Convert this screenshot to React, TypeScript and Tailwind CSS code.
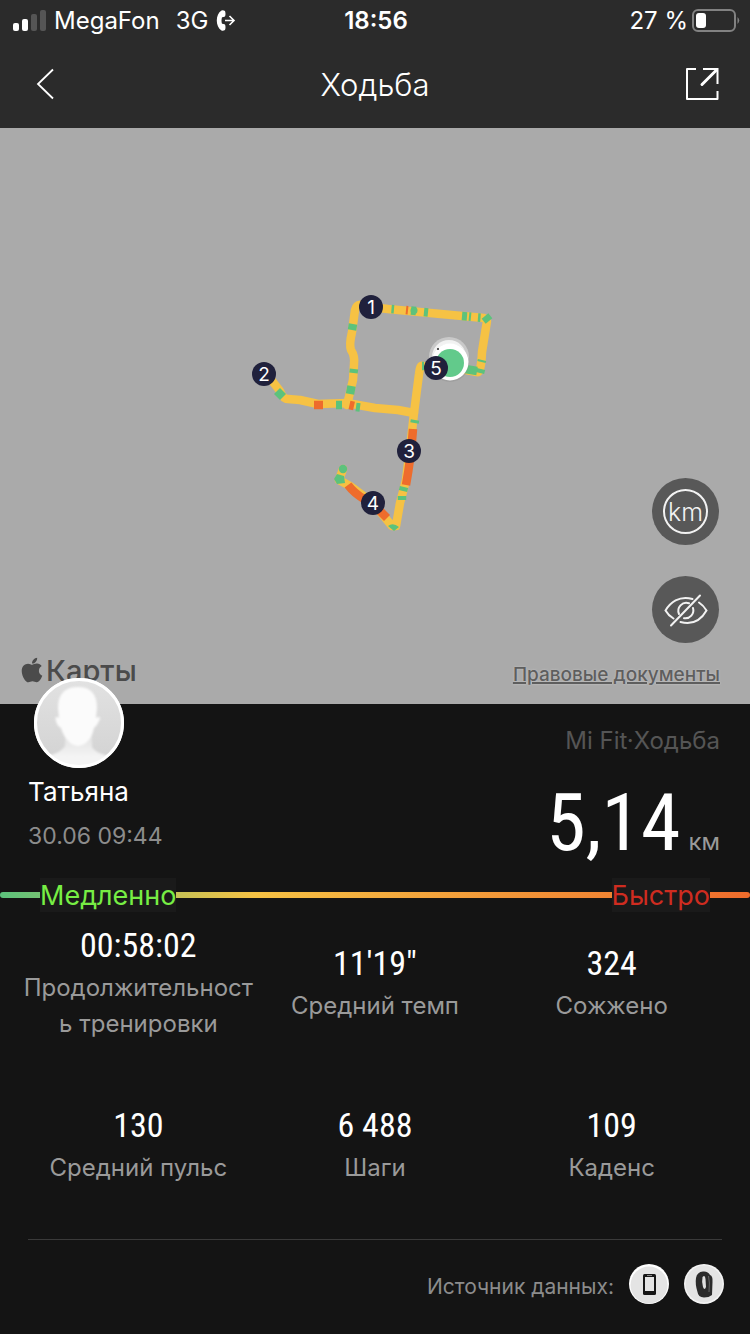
import React from "react";
import { FaApple } from "react-icons/fa";

const YELLOW = "#f6c244";
const GREEN = "#5cc27c";
const ORANGE = "#ee6c2c";

const track = [
  "M371 307 C364 305 357 302 355 310 L352 332 Q349 345 351 350 Q355 356 354 364 L353 380 L347 405",
  "M371 307 L388 309 L430 313 L484 318 L487 321 L482 352 Q481 374 477 372 L466 370",
  "M264 374 L273 382 L280 391 Q283 399 288 399 L300 400 L318 404 L347 403 L375 408 L398 410 L414 413",
  "M436 368 L423 366 Q420 364 419 374 L414 413 L411 440 L406 480 L400 503 L396 526 L392 526 L373 503 L350 486 L339 480 L343 469",
];

const marks: { d: string; color: string }[] = [
  { d: "M353 324 L352 330", color: GREEN },
  { d: "M354 369 L353.500 373", color: GREEN },
  { d: "M351.500 386 L350 394", color: GREEN },
  { d: "M391.500 309 L394 309.200", color: GREEN },
  { d: "M406 310 L408 310.200", color: ORANGE },
  { d: "M411 310.500 L416 311", color: GREEN },
  { d: "M424 312 L428 312.400", color: GREEN },
  { d: "M462 316 L467 316.400", color: GREEN },
  { d: "M469 316.500 L471 316.700", color: GREEN },
  { d: "M478 317.500 L480.500 317.700", color: GREEN },
  { d: "M485 316 L489 321", color: GREEN },
  { d: "M482 360 L481.500 362", color: GREEN },
  { d: "M481 369 L480 373", color: GREEN },
  { d: "M477 371 L465 369", color: GREEN },
  { d: "M277 391 L283 397", color: GREEN },
  { d: "M314 405 L323 405", color: ORANGE },
  { d: "M336 405 L342 405", color: GREEN },
  { d: "M349.500 405 L354 406", color: ORANGE },
  { d: "M356 407 L360 407.500", color: GREEN },
  { d: "M422 366 L424 366", color: GREEN },
  { d: "M415 420 L414.500 423", color: GREEN },
  { d: "M413 429 Q411 458 406 485", color: ORANGE },
  { d: "M404 487 L403 491", color: GREEN },
  { d: "M402 496 L402 500", color: GREEN },
  { d: "M387 518 L380 511", color: ORANGE },
  { d: "M364 499 Q354 493 348 485", color: ORANGE },
];

const points = [
  { n: 1, x: 371, y: 307 },
  { n: 2, x: 264, y: 374 },
  { n: 3, x: 409, y: 451 },
  { n: 4, x: 373, y: 503 },
  { n: 5, x: 436, y: 368 },
];

const stats = [
  { value: "00:58:02", label: ["Продолжительност", "ь тренировки"] },
  { value: "11'19\"", label: ["Средний темп"] },
  { value: "324", label: ["Сожжено"] },
  { value: "130", label: ["Средний пульс"] },
  { value: "6 488", label: ["Шаги"] },
  { value: "109", label: ["Каденс"] },
];

function StatusBar() {
  return (
    <div className="grid h-10 grid-cols-3 items-center pt-0.5 pr-2.5 pl-3 text-[24px] leading-8">
      <div className="flex items-center whitespace-nowrap">
        <svg className="h-6 w-9" viewBox="0 0 36 24" aria-hidden="true">
          <rect x="1" y="14" width="6" height="8" rx="2" fill="#fff" />
          <rect x="10" y="10" width="6" height="12" rx="2" fill="#fff" />
          <rect x="19" y="5" width="6" height="17" rx="2" fill="#555" />
          <rect x="28" y="1" width="6" height="21" rx="2" fill="#555" />
        </svg>
        <span className="ml-1.5">MegaFon</span>
        <span className="ml-4">3G</span>
        <svg className="ml-2 h-6 w-5" viewBox="0 0 20 24" fill="none" aria-hidden="true">
          <path
            d="M5.500 1.500 Q7 .8 9 2 Q10 5 9 7.500 Q7.500 8.400 6 8.300 Q5 12 6 14.700 Q7.500 14.600 9 15.500 Q10 18 9 21 Q7 22.200 5.500 21.500 C-.8 17.500 -.8 5.500 5.500 1.500Z"
            fill="#fff"
          />
          <path d="M9 11.500h9M13.500 7l4.500 4.500-4.500 4.500" stroke="#fff" strokeWidth="1.600" />
        </svg>
      </div>
      <div className="text-center font-semibold">18:56</div>
      <div className="flex items-center justify-end gap-1 whitespace-nowrap">
        <span>27 %</span>
        <svg className="h-6 w-12" viewBox="0 0 48 24" fill="none" aria-hidden="true">
          <rect x="1" y="1" width="42" height="21" rx="5" stroke="#828282" strokeWidth="2" />
          <rect x="4" y="4" width="10" height="15" rx="3" fill="#fff" />
          <path d="M45.500 8 Q49 11.500 45.500 15Z" fill="#828282" />
        </svg>
      </div>
    </div>
  );
}

function NavBar() {
  return (
    <div className="flex h-22 items-center justify-between px-7">
      <button aria-label="Назад" className="flex w-9 justify-center">
        <svg className="h-9 w-9" viewBox="0 0 36 36" fill="none" stroke="#fff" strokeWidth="1.800">
          <path d="M25 3.500 L10 18 L25 32.500" />
        </svg>
      </button>
      <h1 className="pt-0.5 text-[31px] leading-9 font-light">Ходьба</h1>
      <button aria-label="Поделиться">
        <svg className="h-9 w-9" viewBox="0 0 36 36" fill="none" stroke="#fff" strokeWidth="2">
          <path d="M10 3H1V33H31.500V25" strokeLinejoin="round" />
          <path d="M17 3H31.500V18" />
          <path d="M16 18.500L30.500 4" strokeWidth="3" strokeLinecap="round" />
        </svg>
      </button>
    </div>
  );
}

function RouteMap() {
  return (
    <section className="relative h-144 bg-[#aaaaaa]">
      <svg className="h-full w-full" viewBox="0 128 750 576" fill="none" role="img" aria-label="Маршрут">
        <g stroke={YELLOW} strokeWidth="8.500" strokeLinejoin="round" strokeLinecap="round">
          {track.map((d) => (
            <path key={d} d={d} />
          ))}
        </g>
        {marks.map((m) => (
          <path key={m.d} d={m.d} stroke={m.color} strokeWidth="8.500" />
        ))}
        <circle cx="343" cy="469" r="4.200" fill={GREEN} />
        <path d="M337 474 L344 476 L345 483 L337 484 L334 479Z" fill={GREEN} />
        <path d="M388 526 Q393 522 399 527 L394 531Z" fill={GREEN} />
        <circle cx="414" cy="310.500" r="3.500" fill={GREEN} />
        <circle cx="449" cy="357" r="20" fill="#c9c9c9" />
        <circle cx="449" cy="357" r="17" fill="#f2f2f2" />
        <circle cx="450" cy="363" r="19" fill="#8c8c8c" opacity="0.350" />
        <circle cx="450" cy="362" r="18.500" fill="#fff" />
        <circle cx="450" cy="363" r="14" fill="#62ca8b" />
        <circle cx="438" cy="349" r="1" fill="#222" />
        {points.map((p) => (
          <g key={p.n}>
            <circle cx={p.x} cy={p.y} r="12" fill="#20213c" />
            <text x={p.x} y={p.y + 7} textAnchor="middle" fontSize="19" fill="#fff">
              {p.n}
            </text>
          </g>
        ))}
      </svg>
      <div className="absolute right-[30px] bottom-[15px] flex flex-col items-end text-[#f2f2f2]">
        <button aria-label="Километры" className="mr-px mb-[31px] size-[67px] rounded-full bg-[#585858]">
          <span className="mx-auto flex size-[45px] items-center justify-center rounded-full border-2 border-[#f2f2f2] text-[25px] leading-6 font-light">
            km
          </span>
        </button>
        <button aria-label="Скрыть карту" className="mr-px mb-[18px] size-[67px] rounded-full bg-[#585858]">
          <svg className="mx-auto h-9 w-11" viewBox="0 0 44 36" fill="none" stroke="#f2f2f2" strokeWidth="2" strokeLinecap="round">
            <path d="M28.500 7 C15 3 6 11 1.500 18.500 C3.500 22 6 24.500 9.500 26.500" />
            <path d="M35 10.500 C38 12.500 40.500 15 42.500 18.500 C36 30 26 32.500 16.500 30" />
            <path d="M25 11.300 A8 8 0 0 0 15 22" />
            <path d="M29 16 A8 8 0 0 1 20 26.200" />
            <path d="M36 3.500 L7 33.500" />
          </svg>
        </button>
        <a
          href="#legal"
          className="text-[19px] leading-7 font-medium text-[#5e5e5e] underline decoration-2 [text-shadow:0_0_2px_#c8c8c8]"
        >
          Правовые документы
        </a>
      </div>
      <div className="absolute bottom-[13px] left-[18px] flex items-center text-[#4b4b4b]">
        <FaApple className="mb-0.5 size-7" aria-hidden="true" />
        <span className="text-[29px] leading-10 font-medium">Карты</span>
      </div>
    </section>
  );
}

function Avatar() {
  return (
    <svg className="relative -mt-[26px] ml-1.5 size-[90px]" viewBox="0 0 90 90" role="img" aria-label="Татьяна">
      <defs>
        <clipPath id="avatar-clip">
          <circle cx="45" cy="45" r="43" />
        </clipPath>
        <linearGradient id="avatar-bg" x1="0" y1="0" x2="0" y2="1">
          <stop offset="0" stopColor="#e2e2e2" />
          <stop offset="1" stopColor="#d2d2d2" />
        </linearGradient>
        <linearGradient id="avatar-neck" x1="0" y1="0" x2="0" y2="1">
          <stop offset="0" stopColor="#dedede" />
          <stop offset="0.600" stopColor="#f4f4f4" />
        </linearGradient>
        <filter id="avatar-soft">
          <feGaussianBlur stdDeviation="1.200" />
        </filter>
      </defs>
      <circle cx="45" cy="45" r="45" fill="#fff" />
      <g clipPath="url(#avatar-clip)">
        <rect width="90" height="90" fill="url(#avatar-bg)" />
        <g filter="url(#avatar-soft)">
          <path d="M31 56 V68 Q28 74 12 79 V95 H80 V79 Q62 76 58 69 V54Z" fill="url(#avatar-neck)" />
          <path d="M24 30 Q24 9 44 9 Q63 9 63 30 L62 40 Q68 37 65 43 Q63 48 60 50 Q58 60 52 65 Q44 71 36 65 Q29 58 27 50 Q23 48 22 43 Q20 37 25 40Z" fill="#fbfbfb" />
        </g>
      </g>
      <circle cx="45" cy="45" r="43.500" fill="none" stroke="#fff" strokeWidth="3" />
    </svg>
  );
}

function Summary() {
  return (
    <section className="flex justify-between pr-[30px] pl-7">
      <div className="pb-5">
        <Avatar />
        <p className="pt-0.5 text-[26px] leading-11">Татьяна</p>
        <p className="text-[23px] leading-11 text-[#8c8c8c]">30.06 09:44</p>
      </div>
      <div className="pt-[21px] text-right">
        <p className="text-[24px] leading-8 text-[#555555]">Mi Fit·Ходьба</p>
        <p className="flex items-baseline justify-end gap-2 pt-3">
          <span className="font-['Roboto_Condensed','Liberation_Sans_Narrow',sans-serif] text-[80px] leading-[108px]">
            5,14
          </span>
          <span className="text-[24px] text-[#9a9a9a]">км</span>
        </p>
      </div>
    </section>
  );
}

function SpeedScale() {
  return (
    <div className="relative flex justify-between px-10 text-[27px] leading-8">
      <div className="absolute inset-x-0 top-3.5 h-1.5 rounded-full bg-[linear-gradient(90deg,#5cc27c_0%,#f6c244_34%,#ee6c2c_100%)]" />
      <span className="relative bg-[#1a1a1a] pt-0.5 text-[#77ee44]">Медленно</span>
      <span className="relative bg-[#1a1a1a] pt-0.5 text-[#cf2c20]">Быстро</span>
    </div>
  );
}

export default function App() {
  return (
    <main className="min-h-screen bg-[#141414] font-['Inter','Noto_Sans',sans-serif] text-white">
      <header className="bg-[#2b2b2b]">
        <StatusBar />
        <NavBar />
      </header>
      <RouteMap />
      <Summary />
      <SpeedScale />
      <dl className="grid auto-rows-[138px] grid-cols-3 gap-y-6 px-5">
        {stats.map((s) => (
          <div key={s.value} className="flex flex-col-reverse justify-center text-center">
            <dt className="text-[24px] leading-9 text-[#9a9a9a]">
              {s.label.map((line) => (
                <span key={line} className="block">
                  {line}
                </span>
              ))}
            </dt>
            <dd className="font-['Roboto_Condensed','Liberation_Sans_Narrow',sans-serif] text-[34px] leading-[50px]">
              {s.value}
            </dd>
          </div>
        ))}
      </dl>
      <footer className="mx-7 mt-[27px] flex items-center justify-end gap-[15px] border-t border-[#3a3a3a] pt-6">
        <span className="pt-1.5 text-[21px] leading-8 text-[#8c8c8c]">Источник данных:</span>
        <svg className="size-10" viewBox="0 0 40 40" role="img" aria-label="Телефон">
          <circle cx="20" cy="20" r="20" fill="#fff" />
          <circle cx="20" cy="21" r="18.500" fill="#e4e4e4" />
          <rect x="14" y="10" width="13" height="21" rx="1.500" fill="#161616" />
          <rect x="16" y="13" width="9" height="14" fill="#e4e4e4" />
          <path d="M18 11.500h5" stroke="#888" />
        </svg>
        <svg className="-mr-0.5 size-10" viewBox="0 0 40 40" role="img" aria-label="Браслет">
          <circle cx="20" cy="20" r="20" fill="#f4f4f4" />
          <circle cx="20" cy="20" r="18.500" fill="#e4e4e4" />
          <path
            d="M12 14 Q13 8 19 7.500 Q24 7 26 11 Q29 12 28.500 18 L28 31 Q25 33.500 20 33.500 Q14 33 13.500 28 Q11 20 12 14Z"
            fill="#2b2b2b"
          />
          <path d="M18.500 13 Q21 10 21.500 15 L22 23 Q20.500 27 19 23 Q17.500 18 18.500 13Z" fill="#e0e0e0" />
          <path d="M24.500 12 Q26 18 25 28" stroke="#666" fill="none" />
        </svg>
      </footer>
    </main>
  );
}
